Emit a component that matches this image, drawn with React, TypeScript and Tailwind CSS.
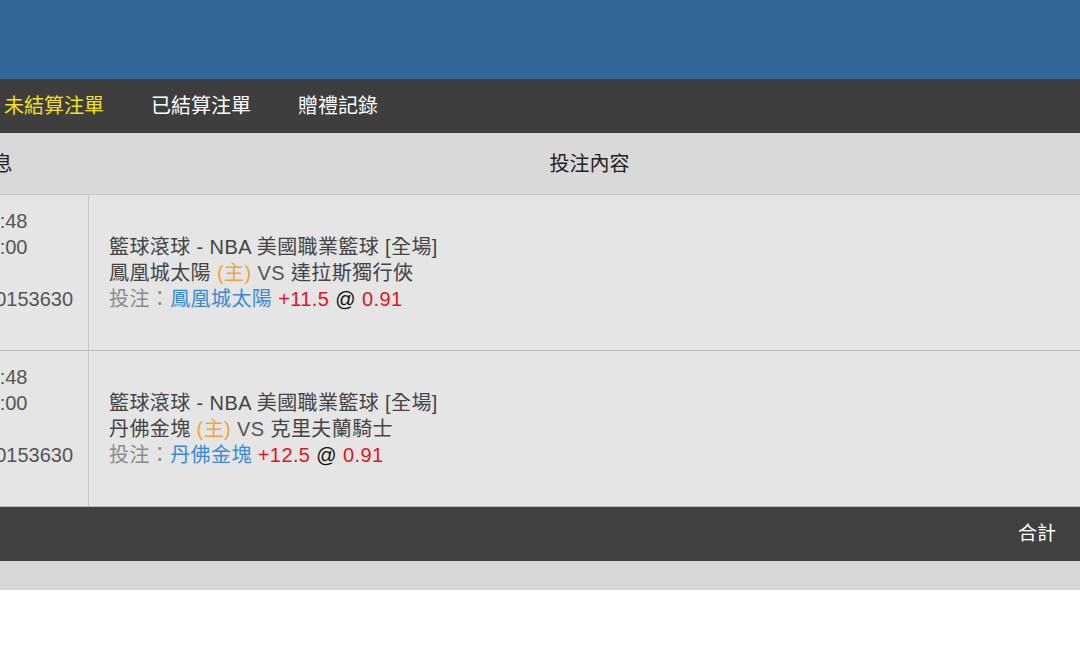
import React from "react";

type Bet = {
  time1: string;
  time2: string;
  id: string;
  league: string;
  home: string;
  away: string;
  pick: string;
  line: string;
  odds: string;
};

const bets: Bet[] = [
  {
    time1: "24-03-15 09:15:48",
    time2: "24-03-15 10:00:00",
    id: "注單號：2403-0153630",
    league: "籃球滾球 - NBA 美國職業籃球 [全場]",
    home: "鳳凰城太陽",
    away: "達拉斯獨行俠",
    pick: "鳳凰城太陽",
    line: "+11.5",
    odds: "0.91",
  },
  {
    time1: "24-03-15 09:15:48",
    time2: "24-03-15 10:00:00",
    id: "注單號：2403-0153630",
    league: "籃球滾球 - NBA 美國職業籃球 [全場]",
    home: "丹佛金塊",
    away: "克里夫蘭騎士",
    pick: "丹佛金塊",
    line: "+12.5",
    odds: "0.91",
  },
];

export default function App() {
  return (
    <div
      className="w-[1080px] h-[657px] overflow-hidden bg-white"
      style={{ fontFamily: '"Liberation Sans", "Noto Sans CJK TC", sans-serif' }}
    >
      <div className="h-[79px] bg-[#336699]" />
      <div className="h-[54px] bg-[#3e3e3e] flex items-center pl-[4px] gap-[47px] text-[20px] leading-none">
        <span className="text-[#f3e11e]">未結算注單</span>
        <span className="text-white">已結算注單</span>
        <span className="text-white">贈禮記錄</span>
      </div>
      <div className="ml-[-144px] w-[1234px]">
        <div className="flex h-[62px] bg-[#d9d9d9] border-b border-[#c8c8c8] text-[20px] text-[#222]">
          <div className="w-[233px] flex items-center justify-center">注單信息</div>
          <div className="flex-1 flex items-center justify-center">投注內容</div>
        </div>
        {bets.map((b, i) => (
          <div key={i} className="flex h-[156px] bg-[#e5e5e5] border-b border-[#bcbcbc] text-[20px] leading-[26px] text-[#444]">
            <div className="w-[233px] border-r border-[#c6c6c6] flex flex-col justify-center pl-[8px] text-[#555] whitespace-nowrap">
              <div>{b.time1}</div>
              <div>{b.time2}</div>
              <div>滾球</div>
              <div>{b.id}</div>
              <div>待確認</div>
            </div>
            <div className="flex-1 flex flex-col justify-center pl-[20px] whitespace-nowrap tracking-[0.4px]">
              <div>{b.league}</div>
              <div>
                {b.home} <span className="text-[#f0a43a]">(主)</span> <span className="text-[#555]">VS</span> {b.away}
              </div>
              <div>
                <span className="text-[#8a8a8a]">投注：</span>
                <span className="text-[#3a8ad6]">{b.pick}</span>{" "}
                <span className="text-[#e0141e]">{b.line}</span>{" "}
                <span className="text-[#111]">@</span>{" "}
                <span className="text-[#e0141e]">{b.odds}</span>
              </div>
            </div>
          </div>
        ))}
        <div className="h-[54px] bg-[#404040] flex items-center justify-end pr-[34px] text-white text-[19px]">
          合計
        </div>
        <div className="h-[29px] bg-[#d7d7d7]" />
      </div>
    </div>
  );
}
